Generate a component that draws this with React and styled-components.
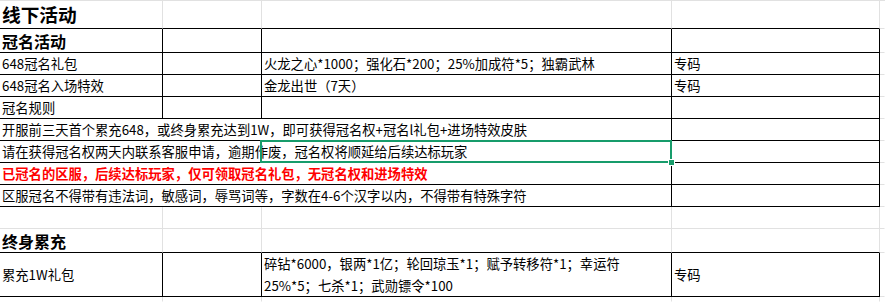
import React from "react";
import styled, { createGlobalStyle } from "styled-components";

const Global = createGlobalStyle`
  html, body { margin: 0; padding: 0; background: #fff; }
  body { font-family: "Noto Sans CJK SC", "Microsoft YaHei", sans-serif; }
`;

const GRID = "#e1e1e1";
const INK = "#000";
const GREEN = "#179c6b";

const Sheet = styled.div`
  position: relative;
  width: 885px;
  height: 302px;
  overflow: hidden;
  box-sizing: border-box;
  border-top: 1px solid ${GRID};
  display: grid;
  grid-template-columns: 163px 99px 410px 208px 5px;
  grid-template-rows: 28px 24px 22px 22px 22px 22px 22px 22px 22px 22px 24px 44px 1fr;
`;

const Cell = styled.div`
  box-sizing: border-box;
  grid-column: ${(p) => p.$span || "auto"};
  border-right: 1px solid ${(p) => (p.$rb ? INK : p.$noRight ? "transparent" : GRID)};
  border-bottom: 1px solid ${(p) => (p.$bb ? INK : p.$noBottom ? "transparent" : GRID)};
  display: flex;
  align-items: center;
  padding: 0 2px;
  white-space: nowrap;
  overflow: visible;
  min-width: 0;
  font-size: ${(p) => p.$size || 13.3}px;
  font-weight: ${(p) => (p.$bold ? 700 : 400)};
  color: ${(p) => p.$color || "#000"};
  line-height: 1;
  position: relative;
  z-index: 1;
`;

const Wrapped = styled.div`
  white-space: normal;
  line-height: 22px;
`;

const Selection = styled.div`
  position: absolute;
  left: 260px;
  top: 139px;
  width: 412px;
  height: 23px;
  box-sizing: border-box;
  border: 2px solid ${GREEN};
  z-index: 3;
  pointer-events: none;
`;

const Handle = styled.div`
  position: absolute;
  right: -5px;
  bottom: -5px;
  width: 5px;
  height: 5px;
  background: ${GREEN};
  border: 1px solid #fff;
`;

function Row({ cells }) {
  return cells.map((c, i) => (
    <Cell key={i} {...c.p}>
      {c.t}
    </Cell>
  ));
}

export default function App() {
  const B = { $rb: true, $bb: true };
  const E = { $noRight: true };
  return (
    <>
      <Global />
      <Sheet>
        {/* row 0 */}
        <Cell $bb $bold $size={18.7}>线下活动</Cell>
        <Cell $bb />
        <Cell $bb />
        <Cell $bb />
        <Cell $noRight />

        {/* row 1 */}
        <Cell {...B} $bold $size={16}>冠名活动</Cell>
        <Cell {...B} />
        <Cell {...B} />
        <Cell {...B} />
        <Cell {...E} />

        {/* row 2 */}
        <Cell {...B}>648冠名礼包</Cell>
        <Cell {...B} />
        <Cell {...B}>火龙之心*1000；强化石*200；25%加成符*5；独霸武林</Cell>
        <Cell {...B}>专码</Cell>
        <Cell {...E} />

        {/* row 3 */}
        <Cell {...B}>648冠名入场特效</Cell>
        <Cell {...B} />
        <Cell {...B}>金龙出世（7天）</Cell>
        <Cell {...B}>专码</Cell>
        <Cell {...E} />

        {/* row 4 */}
        <Cell {...B}>冠名规则</Cell>
        <Cell {...B} />
        <Cell {...B} />
        <Cell {...B} />
        <Cell {...E} />

        {/* row 5 */}
        <Cell {...B} $span="1 / 4">
          开服前三天首个累充648，或终身累充达到1W，即可获得冠名权+冠名l礼包+进场特效皮肤
        </Cell>
        <Cell {...B} />
        <Cell {...E} />

        {/* row 6 */}
        <Cell {...B} $span="1 / 4">
          请在获得冠名权两天内联系客服申请，逾期作废，冠名权将顺延给后续达标玩家
        </Cell>
        <Cell {...B} />
        <Cell {...E} />

        {/* row 7 */}
        <Cell {...B} $span="1 / 4" $bold $color="#ff0000">
          已冠名的区服，后续达标玩家，仅可领取冠名礼包，无冠名权和进场特效
        </Cell>
        <Cell {...B} />
        <Cell {...E} />

        {/* row 8 */}
        <Cell {...B} $span="1 / 4">
          区服冠名不得带有违法词，敏感词，辱骂词等，字数在4-6个汉字以内，不得带有特殊字符
        </Cell>
        <Cell {...B} />
        <Cell {...E} />

        {/* row 9 */}
        <Cell />
        <Cell />
        <Cell />
        <Cell />
        <Cell {...E} />

        {/* row 10 */}
        <Cell $bb $bold $size={16}>终身累充</Cell>
        <Cell $bb />
        <Cell $bb />
        <Cell $bb />
        <Cell {...E} />

        {/* row 11 */}
        <Cell {...B}>累充1W礼包</Cell>
        <Cell {...B} />
        <Cell {...B}>
          <Wrapped>
            碎钻*6000，银两*1亿；轮回琼玉*1；赋予转移符*1；幸运符
            <br />
            25%*5；七杀*1；武勋镖令*100
          </Wrapped>
        </Cell>
        <Cell {...B}>专码</Cell>
        <Cell {...E} />

        {/* row 12 */}
        <Cell $noBottom />
        <Cell $noBottom />
        <Cell $noBottom />
        <Cell $noBottom />
        <Cell $noBottom $noRight />

        <Selection>
          <Handle />
        </Selection>
      </Sheet>
    </>
  );
}
